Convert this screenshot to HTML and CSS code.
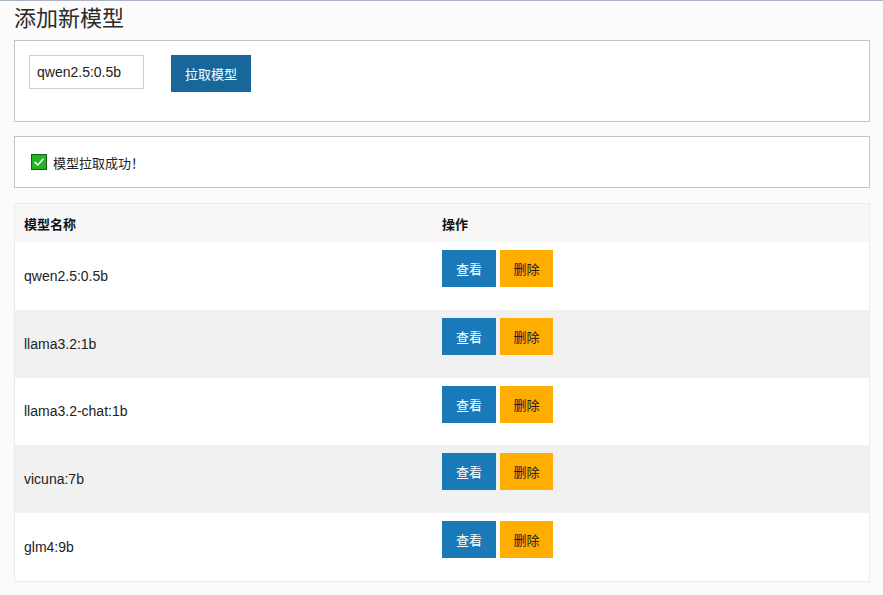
FILE: index.html
```html
<!DOCTYPE html>
<html lang="zh">
<head>
<meta charset="utf-8">
<title>添加新模型</title>
<link rel="stylesheet" href="styles.css">
</head>
<body>
<div class="page">
  <h2 class="title">添加新模型</h2>
  <div class="box pull-box">
    <form class="pull-form">
      <input class="model-input" type="text" value="qwen2.5:0.5b">
      <button type="button" class="btn btn-pull">拉取模型</button>
    </form>
  </div>
  <div class="box msg-box">
    <svg class="check" width="16" height="16" viewBox="0 0 16 16">
      <rect x="0.5" y="0.5" width="15" height="15" fill="#22b322" stroke="#155e15"/>
      <path d="M4 8.3 L6.8 11 L12 5.2" fill="none" stroke="#fff" stroke-width="1.6" stroke-linecap="round" stroke-linejoin="round"/>
    </svg>
    <span>模型拉取成功！</span>
  </div>
  <div class="table-wrap">
    <table class="models">
      <thead>
        <tr><th class="c-name">模型名称</th><th class="c-ops">操作</th></tr>
      </thead>
      <tbody>
        <tr><td class="c-name">qwen2.5:0.5b</td><td class="c-ops"><button class="btn btn-view">查看</button> <button class="btn btn-del">删除</button></td></tr>
        <tr class="alt"><td class="c-name">llama3.2:1b</td><td class="c-ops"><button class="btn btn-view">查看</button> <button class="btn btn-del">删除</button></td></tr>
        <tr><td class="c-name">llama3.2-chat:1b</td><td class="c-ops"><button class="btn btn-view">查看</button> <button class="btn btn-del">删除</button></td></tr>
        <tr class="alt"><td class="c-name">vicuna:7b</td><td class="c-ops"><button class="btn btn-view">查看</button> <button class="btn btn-del">删除</button></td></tr>
        <tr><td class="c-name">glm4:9b</td><td class="c-ops"><button class="btn btn-view">查看</button> <button class="btn btn-del">删除</button></td></tr>
      </tbody>
    </table>
  </div>
</div>
</body>
</html>
```

FILE: styles.css
```css
html, body {
  margin: 0;
  padding: 0;
}
body {
  background: #fbfbfb;
  border-top: 1px solid #a8b2c2;
  font-family: "Liberation Sans", Arial, "Noto Sans CJK SC", sans-serif;
  font-size: 14px;
  color: #222;
}
.page {
  padding: 0 13px 0 14px;
}
.title {
  margin: 0;
  padding-top: 2px;
  height: 37px;
  font-size: 22px;
  font-weight: normal;
  line-height: 26px;
  color: #2a2a2a;
  font-family: "Noto Sans CJK SC", sans-serif;
}
.box {
  background: #fff;
  border: 1px solid #c4c4c4;
}
.pull-box {
  padding: 14px 14px 29px 14px;
}
.pull-form {
  display: flex;
  align-items: flex-start;
  gap: 27px;
  margin: 0;
}
.model-input {
  box-sizing: border-box;
  width: 115px;
  height: 34px;
  border: 1px solid #cfcfcf;
  padding: 0 7px;
  font-family: "Liberation Sans", Arial, sans-serif;
  font-size: 14px;
  color: #222;
  background: #fff;
  outline: none;
}
.btn {
  border: none;
  height: 37px;
  padding: 0;
  white-space: nowrap;
  font-family: "Noto Sans CJK SC", sans-serif;
  font-size: 13px;
  cursor: pointer;
  vertical-align: top;
}
.btn-pull {
  width: 80px;
  background: #17679b;
  color: #fff;
}
.msg-box {
  margin-top: 14px;
  height: 52px;
  box-sizing: border-box;
  display: flex;
  align-items: center;
  padding: 0 16px;
  gap: 6px;
  font-family: "Noto Sans CJK SC", sans-serif;
  font-size: 13px;
}
.check {
  display: block;
  flex: none;
}
.table-wrap {
  margin-top: 15px;
  border: 1px solid #ebebeb;
  background: #fff;
}
.models {
  width: 100%;
  border-collapse: collapse;
  border-spacing: 0;
}
.models th {
  height: 38px;
  background: #f7f7f7;
  text-align: left;
  font-family: "Noto Sans CJK SC", sans-serif;
  font-size: 13px;
  font-weight: bold;
  color: #111;
  padding: 0;
}
.models td {
  height: 67.75px;
  padding: 0;
  box-sizing: border-box;
}
.models tr.alt td {
  background: #f1f1f1;
}
.c-name {
  width: 408px;
  padding-left: 9px !important;
  vertical-align: middle;
}
.models td.c-name {
  font-size: 14px;
  color: #222;
  padding-top: 0 !important;
}
.c-ops {
  padding-left: 10px !important;
}
.models td.c-ops {
  vertical-align: top;
  padding-top: 8px !important;
}
.btn-view {
  width: 54px;
  background: #1a7ab9;
  color: #fff;
}
.btn-del {
  width: 53px;
  background: #ffad01;
  color: #222;
}
```
